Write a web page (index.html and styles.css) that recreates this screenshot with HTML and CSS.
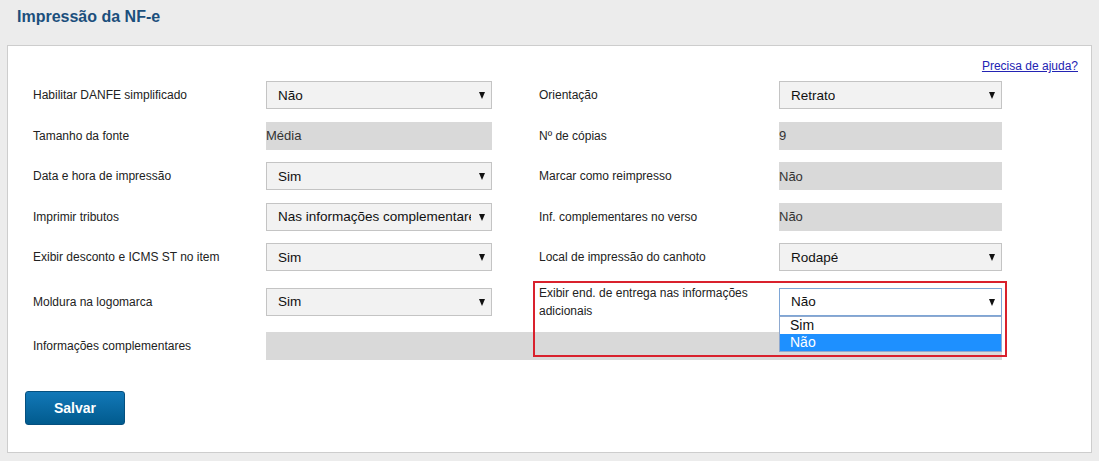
FILE: index.html
```html
<!DOCTYPE html>
<html lang="pt-BR">
<head>
  <meta charset="UTF-8" />
  <meta name="viewport" content="width=device-width, initial-scale=1.0"/>
  <title>Impressão da NF-e</title>
  <link rel="stylesheet" href="styles.css">
</head>
<body>
  <h1 class="page-title">Impressão da NF-e</h1>

  <div class="panel">
    <div class="help"><a href="#">Precisa de ajuda?</a></div>

    <div class="form">
      <div class="row">
        <label>Habilitar DANFE simplificado</label>
        <div class="select"><span class="value">Não</span><span class="arrow"></span></div>
        <span></span>
        <label>Orientação</label>
        <div class="select"><span class="value">Retrato</span><span class="arrow"></span></div>
      </div>

      <div class="row">
        <label>Tamanho da fonte</label>
        <div class="readonly">Média</div>
        <span></span>
        <label>Nº de cópias</label>
        <div class="readonly">9</div>
      </div>

      <div class="row">
        <label>Data e hora de impressão</label>
        <div class="select"><span class="value">Sim</span><span class="arrow"></span></div>
        <span></span>
        <label>Marcar como reimpresso</label>
        <div class="readonly">Não</div>
      </div>

      <div class="row">
        <label>Imprimir tributos</label>
        <div class="select"><span class="value">Nas informações complementares</span><span class="arrow"></span></div>
        <span></span>
        <label>Inf. complementares no verso</label>
        <div class="readonly">Não</div>
      </div>

      <div class="row">
        <label>Exibir desconto e ICMS ST no item</label>
        <div class="select"><span class="value">Sim</span><span class="arrow"></span></div>
        <span></span>
        <label>Local de impressão do canhoto</label>
        <div class="select"><span class="value">Rodapé</span><span class="arrow"></span></div>
      </div>

      <div class="row">
        <label>Moldura na logomarca</label>
        <div class="select"><span class="value">Sim</span><span class="arrow"></span></div>
        <span></span>
        <div class="highlight">
          <label>Exibir end. de entrega nas informações adicionais</label>
          <div class="select focused">
            <span class="value">Não</span><span class="arrow"></span>
            <ul class="options">
              <li>Sim</li>
              <li class="selected">Não</li>
            </ul>
          </div>
        </div>
      </div>

      <div class="row">
        <label>Informações complementares</label>
        <div class="readonly wide"></div>
      </div>
    </div>

    <button class="btn-save">Salvar</button>
  </div>
</body>
</html>
```

FILE: styles.css
```css
body {
  margin: 0;
  background: #ececec;
  font-family: "Liberation Sans", Arial, sans-serif;
  color: #333;
}

.page-title {
  margin: 0;
  padding: 7px 17px 0;
  height: 21px;
  line-height: 20px;
  font-size: 16px;
  font-weight: bold;
  color: #1b4f7c;
}

.panel {
  margin: 17px 7px 0;
  height: 408px;
  box-sizing: border-box;
  background: #fff;
  border: 1px solid #cdcdcd;
  padding: 13px 13px 0 17px;
}

.help {
  text-align: right;
  font-size: 12px;
  line-height: 15px;
}

.help a {
  color: #2323b3;
}

.form {
  margin: 7px 0 0 8px;
  display: flex;
  flex-direction: column;
  gap: 12.5px;
}

.row {
  display: grid;
  grid-template-columns: 233px 226px 47px 240px 223px;
  align-items: center;
  min-height: 28px;
}

.row label {
  font-size: 12px;
  line-height: 18px;
  color: #222;
}

.select {
  position: relative;
  height: 28px;
  box-sizing: border-box;
  background: #f2f2f2;
  border: 1px solid #c4c4c4;
  display: flex;
  align-items: center;
  padding: 0 20px 0 11px;
  font-size: 13.5px;
  color: #111;
}

.select .value {
  white-space: nowrap;
  overflow: hidden;
}

.select .arrow {
  position: absolute;
  right: 6px;
  top: 10px;
  width: 0;
  height: 0;
  border-left: 3.5px solid transparent;
  border-right: 3.5px solid transparent;
  border-top: 7px solid #111;
}

.readonly {
  height: 28px;
  background: #d9d9d9;
  display: flex;
  align-items: center;
  font-size: 13px;
  color: #333;
}

.readonly.wide {
  grid-column: 2 / 6;
}

.highlight {
  grid-column: 4 / 6;
  display: grid;
  grid-template-columns: 240px 223px;
  align-items: center;
  position: relative;
}

.highlight::before {
  content: "";
  position: absolute;
  left: -6px;
  top: -3px;
  width: 470px;
  height: 72px;
  border: 2px solid #d9212d;
  z-index: 2;
  pointer-events: none;
}

.select.focused {
  background: #fff;
  border-color: #7ea6d6;
}

.options {
  position: absolute;
  left: -1px;
  top: 27px;
  width: 223px;
  box-sizing: border-box;
  margin: 0;
  padding: 0;
  list-style: none;
  background: #fff;
  border: 1px solid #8fa9cf;
  z-index: 1;
}

.options li {
  height: 17px;
  line-height: 17px;
  padding-left: 10px;
  font-size: 14px;
  color: #111;
}

.options li.selected {
  background: #1e90ff;
  color: #fff;
}

.btn-save {
  margin-top: 31px;
  width: 100px;
  height: 34px;
  border: 1px solid #05507f;
  border-radius: 3px;
  background: linear-gradient(#1278b8, #015b8e);
  color: #fff;
  font-family: "Liberation Sans", Arial, sans-serif;
  font-size: 14px;
  font-weight: bold;
  cursor: pointer;
}
```
